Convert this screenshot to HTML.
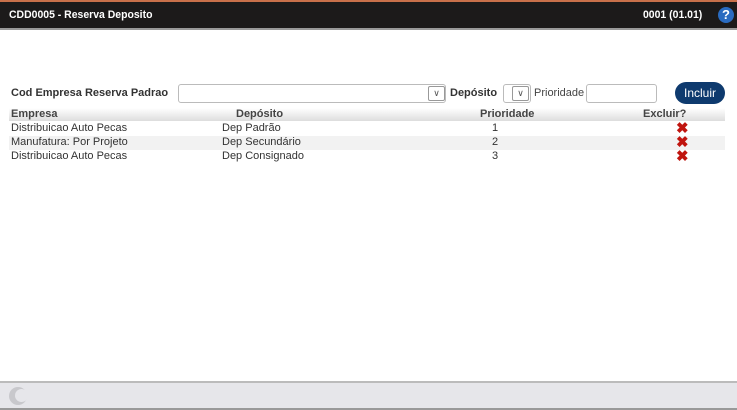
<!DOCTYPE html>
<html><head><style>
body{margin:0;width:737px;height:410px;background:#fff;font-family:"Liberation Sans",sans-serif;position:relative;overflow:hidden}
.top{position:absolute;left:0;top:0;width:737px;height:2px;background:#c8704a}
.hdr{position:absolute;left:0;top:2px;width:737px;height:26px;background:#1c1a1a;color:#fff;font-size:11px;font-weight:bold}
.hdr .t{position:absolute;left:9px;top:7px;transform:scaleX(.95);transform-origin:left}
.hdr .r{position:absolute;left:643px;top:7px;transform:scaleX(.95);transform-origin:left}
.help{position:absolute;left:718px;top:5px;width:16px;height:16px;border-radius:50%;background:#2a6bc0;color:#fff;font-size:13px;font-weight:bold;text-align:center;line-height:16px}
.line{position:absolute;left:0;top:28px;width:737px;height:2px;background:#999}
.lbl{position:absolute;font-size:11px;font-weight:bold;color:#333;white-space:nowrap}
.box{position:absolute;border:1px solid #bbb;border-radius:3px;background:#fff;height:17px}
.dd{position:absolute;width:15px;height:13px;border:1px solid #999;border-radius:2px;font-size:9px;color:#555;text-align:center;line-height:12px}
.btn{position:absolute;left:675px;top:82px;width:50px;height:22px;border-radius:11px;background:#0e3a6e;color:#fff;font-size:12px;text-align:center;line-height:22px}
.th{position:absolute;left:9px;top:108px;width:716px;height:13px;background:linear-gradient(#fff,#ddd);font-size:11px;font-weight:bold;color:#444}
.row{position:absolute;left:9px;width:716px;height:14px;font-size:11px;color:#333}
.row span,.th span{position:absolute;top:0}
.x{color:#c0150f;font-weight:bold;font-size:15px;line-height:13px}
.ft{position:absolute;left:0;top:381px;width:737px;height:25px;background:#e6e6ea;border-top:2px solid #bbb;border-bottom:2px solid #999}
</style></head><body>
<div class="top"></div>
<div class="hdr"><span class="t">CDD0005 - Reserva Deposito</span><span class="r">0001 (01.01)</span><div class="help">?</div></div>
<div class="line"></div>
<div class="lbl" style="left:11px;top:87px">Cod Empresa Reserva Padrao</div>
<div class="box" style="left:178px;top:84px;width:266px"></div>
<div class="dd" style="left:428px;top:86px">&#8744;</div>
<div class="lbl" style="left:450px;top:87px">Depósito</div>
<div class="box" style="left:503px;top:84px;width:26px"></div>
<div class="dd" style="left:512px;top:86px">&#8744;</div>
<div style="position:absolute;left:534px;top:87px;font-size:11px;color:#444">Prioridade</div>
<div class="box" style="left:586px;top:84px;width:69px"></div>
<div class="btn">Incluir</div>
<div class="th"><span style="left:2px">Empresa</span><span style="left:227px">Depósito</span><span style="left:471px">Prioridade</span><span style="left:634px">Excluir?</span></div>
<div class="row" style="top:122px"><span style="left:2px">Distribuicao Auto Pecas</span><span style="left:213px">Dep Padrão</span><span style="left:483px">1</span><span class="x" style="left:667px">✖</span></div>
<div class="row" style="top:136px;background:#f2f2f2"><span style="left:2px">Manufatura: Por Projeto</span><span style="left:213px">Dep Secundário</span><span style="left:483px">2</span><span class="x" style="left:667px">✖</span></div>
<div class="row" style="top:150px"><span style="left:2px">Distribuicao Auto Pecas</span><span style="left:213px">Dep Consignado</span><span style="left:483px">3</span><span class="x" style="left:667px">✖</span></div>
<div class="ft"><div style="position:absolute;left:9px;top:4px;width:18px;height:18px;border-radius:50%;background:#c8c8cc"></div><div style="position:absolute;left:15px;top:6px;width:13px;height:13px;border-radius:50%;background:#e6e6ea"></div></div>
</body></html>
